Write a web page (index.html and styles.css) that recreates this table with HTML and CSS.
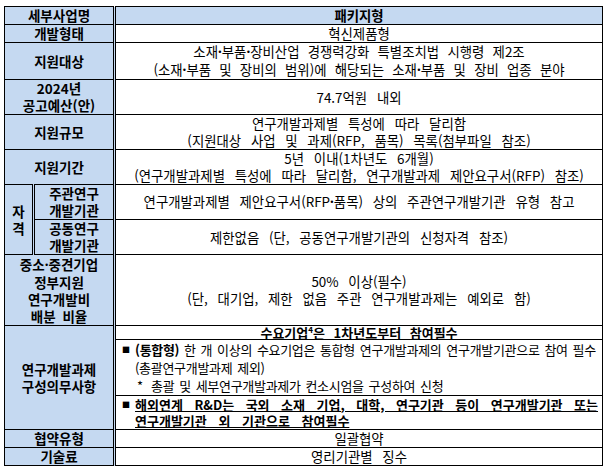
FILE: index.html
```html
<!DOCTYPE html>
<html lang="ko">
<head>
<meta charset="utf-8">
<title>패키지형</title>
<link rel="stylesheet" href="styles.css">
</head>
<body>
<table class="spec">
  <colgroup><col class="c-grp"><col class="c-sub"><col class="c-val"></colgroup>
  <tr class="h18">
    <th colspan="2">세부사업명</th>
    <td class="head-val">패키지형</td>
  </tr>
  <tr class="h18">
    <th colspan="2">개발형태</th>
    <td>혁신제품형</td>
  </tr>
  <tr class="h35">
    <th colspan="2">지원대상</th>
    <td class="ws-narrow">소재<span class="md">·</span>부품<span class="md">·</span>장비산업 경쟁력강화 특별조치법 시행령 제2조<br>(소재<span class="md">·</span>부품 및 장비의 범위)에 해당되는 소재<span class="md">·</span>부품 및 장비 업종 분야</td>
  </tr>
  <tr class="h35">
    <th colspan="2">2024년<br>공고예산(안)</th>
    <td>74.7억원 내외</td>
  </tr>
  <tr class="h34">
    <th colspan="2">지원규모</th>
    <td>연구개발과제별 특성에 따라 달리함<br>(지원대상 사업 및 과제(RFP, 품목) 목록(첨부파일 참조)</td>
  </tr>
  <tr class="h35">
    <th colspan="2">지원기간</th>
    <td>5년 이내(1차년도 6개월)<br>(연구개발과제별 특성에 따라 달리함, 연구개발과제 제안요구서(RFP) 참조)</td>
  </tr>
  <tr class="h36">
    <th rowspan="2" class="grp">자<br>격</th>
    <th class="sub">주관연구<br>개발기관</th>
    <td>연구개발과제별 제안요구서(RFP<span class="md">·</span>품목) 상의 주관연구개발기관 유형 참고</td>
  </tr>
  <tr class="h35">
    <th class="sub">공동연구<br>개발기관</th>
    <td>제한없음 (단, 공동연구개발기관의 신청자격 참조)</td>
  </tr>
  <tr class="h72">
    <th colspan="2">중소<span class="md">·</span>중견기업<br>정부지원<br>연구개발비<br>배분 비율</th>
    <td>50% 이상(필수)<br>(단, 대기업, 제한 없음 주관 연구개발과제는 예외로 함)</td>
  </tr>
  <tr class="h15">
    <th colspan="2" rowspan="3">연구개발과제<br>구성의무사항</th>
    <td class="must"><u>수요기업<sup>4</sup>은 1차년도부터 참여필수</u></td>
  </tr>
  <tr class="h57">
    <td class="list">
      <div class="item">
        <span class="bullet">■</span>
        <div class="item-body">
          <div class="line"><b>(통합형)</b> 한 개 이상의 수요기업은 통합형 연구개발과제의 연구개발기관으로 참여 필수</div>
          <div class="line">(총괄연구개발과제 제외)</div>
          <div class="line note"><span class="star">*</span>총괄 및 세부연구개발과제가 컨소시엄을 구성하여 신청</div>
        </div>
      </div>
    </td>
  </tr>
  <tr class="h35">
    <td class="list overseas">
      <div class="item">
        <span class="bullet">■</span>
        <div class="item-body">
          <div class="just"><u>해외연계 R&amp;D는 국외 소재 기업, 대학, 연구기관 등이 연구개발기관 또는</u></div>
          <div class="tail"><u>연구개발기관 외 기관으로 참여필수</u></div>
        </div>
      </div>
    </td>
  </tr>
  <tr class="h17">
    <th colspan="2">협약유형</th>
    <td>일괄협약</td>
  </tr>
  <tr class="h18">
    <th colspan="2">기술료</th>
    <td>영리기관별 징수</td>
  </tr>
</table>
</body>
</html>
```

FILE: styles.css
```css
html, body {
  margin: 0;
  padding: 0;
  background: #fff;
}

body {
  font-family: "Noto Sans CJK KR", "Noto Sans", sans-serif;
  color: #000;
}

.spec {
  border-collapse: collapse;
  table-layout: fixed;
  width: 599px;
  margin: 6px 0 0 4px;
  font-size: 13.4px;
  word-spacing: 6px;
}

.c-grp { width: 29px; }
.c-sub { width: 81px; }
.c-val { width: 488px; }

.spec th,
.spec td {
  border: 1px solid #000;
  padding: 0;
  text-align: center;
  vertical-align: middle;
  line-height: 17px;
}

.spec th {
  background: #c5d9f1;
  font-weight: 700;
  font-size: 13.5px;
  word-spacing: 3px;
  border-right: 3px double #000;
}

.spec td.ws-narrow { word-spacing: 4.5px; }

.md {
  font-family: "Noto Sans", sans-serif;
  font-weight: 700;
}

.h15 { height: 14px; }
.h17 { height: 16px; }
.h18 { height: 17px; }
.h34 { height: 33px; }
.h35 { height: 34px; }
.h36 { height: 35px; }
.h57 { height: 56px; }
.h72 { height: 71px; }

.spec td.head-val {
  background: #c5d9f1;
  font-weight: 700;
}

.spec td.must {
  font-size: 13px;
  font-weight: 700;
  line-height: 13px;
  word-spacing: 5px;
}

.must sup {
  font-size: 8px;
  line-height: 0;
  vertical-align: 5px;
  word-spacing: 0;
}

.spec td.list {
  text-align: left;
  padding: 0 4px 0 6px;
}

.item {
  display: flex;
  align-items: flex-start;
}

.bullet {
  flex: none;
  width: 13px;
  font-size: 8px;
  line-height: 18px;
  word-spacing: 0;
}

.item-body {
  flex: 1;
  min-width: 0;
}

.list .item-body {
  font-size: 13px;
  line-height: 18px;
  letter-spacing: -0.3px;
  word-spacing: 1.5px;
}

.list .line { white-space: nowrap; }

.list .item-body b { font-weight: 700; }

.note .star {
  display: inline-block;
  width: 14px;
  padding-left: 2px;
}

.overseas .bullet { line-height: 16px; }

.overseas .item-body {
  font-size: 13px;
  font-weight: 700;
  line-height: 16px;
  letter-spacing: 0;
  word-spacing: 3px;
}

.overseas .just {
  text-align: justify;
  text-align-last: justify;
}

.overseas .tail {
  word-spacing: 8px;
  white-space: nowrap;
}
```
